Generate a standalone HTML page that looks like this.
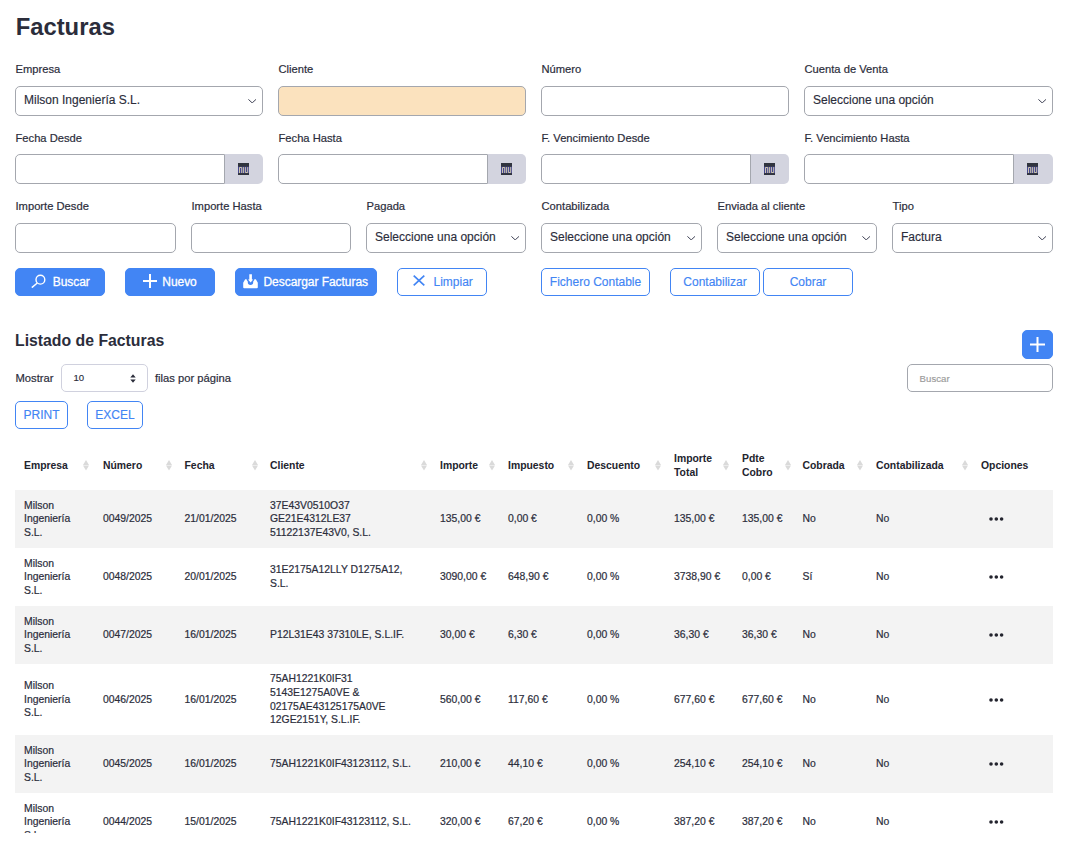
<!DOCTYPE html>
<html lang="es">
<head>
<meta charset="utf-8">
<title>Facturas</title>
<style>
*{box-sizing:border-box;}
html,body{margin:0;padding:0;background:#fff;}
body{width:1068px;height:851px;overflow:hidden;position:relative;font-family:"Liberation Sans",Arial,sans-serif;color:#2b2d3b;font-size:12px;}
#clip{position:absolute;left:0;top:0;width:1068px;height:833px;overflow:hidden;}
h1{position:absolute;left:15.7px;top:13px;margin:0;font-size:23.8px;line-height:28px;font-weight:bold;color:#2b2d3b;}
.lbl{-webkit-text-stroke:0.2px #2b2d3b;margin-left:0.5px;position:absolute;font-size:11.2px;line-height:14px;color:#2b2d3b;white-space:nowrap;}
.inp{-webkit-text-stroke:0.15px currentColor;position:absolute;height:30px;border:1px solid #a4a7ae;border-radius:5px;background:#fff;font-size:12px;line-height:27px;padding-left:8px;color:#2b2d3b;white-space:nowrap;}
.inp.orange{background:#fbe2be;}
.inp.grp{border-radius:5px 0 0 5px;}
.addon{position:absolute;width:38px;height:30px;background:#d3d4df;border-radius:0 5px 5px 0;}
.addon svg{position:absolute;left:13px;top:9px;}
.chev{position:absolute;right:5.8px;top:11.6px;width:8.4px;height:4.4px;}
.btn{position:absolute;height:28px;border-radius:5px;font-size:12px;line-height:26px;white-space:nowrap;}
.btn span{position:absolute;top:0;}
.btn svg{position:absolute;}
.btn.p{background:#4285f4;color:#fff;border:1px solid #4285f4;-webkit-text-stroke:0.3px #fff;letter-spacing:-0.05px;}
.btn.o{background:#fff;color:#4285f4;border:1px solid #4285f4;-webkit-text-stroke:0.15px #4285f4;}
h2{position:absolute;left:15px;top:331px;margin:0;font-size:15.8px;line-height:20px;font-weight:bold;color:#2b2d3b;}
table{position:absolute;left:15px;top:440px;width:1038px;border-collapse:collapse;font-size:10.4px;line-height:13.52px;color:#2b2d3b;table-layout:fixed;}
th{text-align:left;font-weight:bold;padding:2.2px 0 0 9px;height:50px;vertical-align:middle;position:relative;line-height:14px;color:#23242e;}
td{padding:0 0 0 9px;vertical-align:middle;-webkit-text-stroke:0.2px #2b2d3b;}
tbody tr{height:58px;}
tbody tr.r4{height:71px;}
tbody tr:nth-child(odd){background:#f3f3f3;}
.tl{display:block;position:relative;top:-0.6px;}
.sort{position:absolute;top:20.2px;width:6px;height:10.5px;}
.dots{display:block;margin-left:8px;margin-top:0;}
</style>
</head>
<body>
<div id="clip">
<h1>Facturas</h1>
<div class="lbl" style="left:15px;top:62px">Empresa</div>
<div class="lbl" style="left:278px;top:62px">Cliente</div>
<div class="lbl" style="left:541px;top:62px">Número</div>
<div class="lbl" style="left:804px;top:62px">Cuenta de Venta</div>
<div class="inp" style="left:15px;top:86px;width:248px">Milson Ingeniería S.L.<svg class="chev" viewBox="0 0 8.4 4.4"><path d="M0.4 0.4 L4.2 3.9 L8 0.4" fill="none" stroke="#35384c" stroke-width="0.95"/></svg></div>
<div class="inp orange" style="left:278px;top:86px;width:248px"></div>
<div class="inp" style="left:541px;top:86px;width:248px"></div>
<div class="inp" style="left:804px;top:86px;width:249px">Seleccione una opción<svg class="chev" viewBox="0 0 8.4 4.4"><path d="M0.4 0.4 L4.2 3.9 L8 0.4" fill="none" stroke="#35384c" stroke-width="0.95"/></svg></div>
<div class="lbl" style="left:15px;top:131px">Fecha Desde</div>
<div class="inp grp" style="left:15px;top:154px;width:210px"></div>
<div class="addon" style="left:225px;top:154px"><svg width="11" height="12" viewBox="0 0 11 12"><rect x="0" y="0" width="11" height="12" fill="#30343e"/><rect x="0" y="3.7" width="11" height="6.4" fill="#45468f"/><path d="M1.5 10V4.5H3.7V10M5.4 4.1V10M7.4 4.1V9.5H9.7V4.1" fill="none" stroke="#e4ddb0" stroke-width="0.85"/></svg></div>
<div class="lbl" style="left:278px;top:131px">Fecha Hasta</div>
<div class="inp grp" style="left:278px;top:154px;width:210px"></div>
<div class="addon" style="left:488px;top:154px"><svg width="11" height="12" viewBox="0 0 11 12"><rect x="0" y="0" width="11" height="12" fill="#30343e"/><rect x="0" y="3.7" width="11" height="6.4" fill="#45468f"/><path d="M1.5 10V4.5H3.7V10M5.4 4.1V10M7.4 4.1V9.5H9.7V4.1" fill="none" stroke="#e4ddb0" stroke-width="0.85"/></svg></div>
<div class="lbl" style="left:541px;top:131px">F. Vencimiento Desde</div>
<div class="inp grp" style="left:541px;top:154px;width:210px"></div>
<div class="addon" style="left:751px;top:154px"><svg width="11" height="12" viewBox="0 0 11 12"><rect x="0" y="0" width="11" height="12" fill="#30343e"/><rect x="0" y="3.7" width="11" height="6.4" fill="#45468f"/><path d="M1.5 10V4.5H3.7V10M5.4 4.1V10M7.4 4.1V9.5H9.7V4.1" fill="none" stroke="#e4ddb0" stroke-width="0.85"/></svg></div>
<div class="lbl" style="left:804px;top:131px">F. Vencimiento Hasta</div>
<div class="inp grp" style="left:804px;top:154px;width:210px"></div>
<div class="addon" style="left:1014px;top:154px;width:39px"><svg width="11" height="12" viewBox="0 0 11 12"><rect x="0" y="0" width="11" height="12" fill="#30343e"/><rect x="0" y="3.7" width="11" height="6.4" fill="#45468f"/><path d="M1.5 10V4.5H3.7V10M5.4 4.1V10M7.4 4.1V9.5H9.7V4.1" fill="none" stroke="#e4ddb0" stroke-width="0.85"/></svg></div>
<div class="lbl" style="left:15px;top:199px">Importe Desde</div>
<div class="inp" style="left:15px;top:223px;width:161px"></div>
<div class="lbl" style="left:191px;top:199px">Importe Hasta</div>
<div class="inp" style="left:191px;top:223px;width:160px"></div>
<div class="lbl" style="left:366px;top:199px">Pagada</div>
<div class="inp" style="left:366px;top:223px;width:160px">Seleccione una opción<svg class="chev" viewBox="0 0 8.4 4.4"><path d="M0.4 0.4 L4.2 3.9 L8 0.4" fill="none" stroke="#35384c" stroke-width="0.95"/></svg></div>
<div class="lbl" style="left:541px;top:199px">Contabilizada</div>
<div class="inp" style="left:541px;top:223px;width:161px">Seleccione una opción<svg class="chev" viewBox="0 0 8.4 4.4"><path d="M0.4 0.4 L4.2 3.9 L8 0.4" fill="none" stroke="#35384c" stroke-width="0.95"/></svg></div>
<div class="lbl" style="left:717px;top:199px">Enviada al cliente</div>
<div class="inp" style="left:717px;top:223px;width:160px">Seleccione una opción<svg class="chev" viewBox="0 0 8.4 4.4"><path d="M0.4 0.4 L4.2 3.9 L8 0.4" fill="none" stroke="#35384c" stroke-width="0.95"/></svg></div>
<div class="lbl" style="left:892px;top:199px">Tipo</div>
<div class="inp" style="left:892px;top:223px;width:161px">Factura<svg class="chev" viewBox="0 0 8.4 4.4"><path d="M0.4 0.4 L4.2 3.9 L8 0.4" fill="none" stroke="#35384c" stroke-width="0.95"/></svg></div>
<div class="btn p" style="left:15px;top:268px;width:90px"><svg style="left:15px;top:5px" width="15" height="14" viewBox="0 0 15 14"><circle cx="9.4" cy="5.7" r="4.4" fill="none" stroke="#fff" stroke-width="1.4"/><path d="M6.3 9 L0.8 13.6" stroke="#fff" stroke-width="1.5" fill="none"/></svg><span style="left:36.7px">Buscar</span></div>
<div class="btn p" style="left:125px;top:268px;width:90px"><svg style="left:17px;top:5.3px" width="14" height="14" viewBox="0 0 14 14"><path d="M7 0V14M0 7H14" stroke="#fff" stroke-width="2" fill="none"/></svg><span style="left:36.3px">Nuevo</span></div>
<div class="btn p" style="left:235px;top:268px;width:142px"><svg style="left:7.1px;top:4.7px" width="15" height="15" viewBox="0 0 15 15"><path d="M0.2 8.8L2.2 5.3H12.8L14.8 8.8V13.2Q14.8 14.2 13.8 14.2H1.2Q0.2 14.2 0.2 13.2Z" fill="#fff"/><path d="M3.7 5H11.3V6.1L10.2 7.6V8.3A2.7 2.7 0 0 1 4.8 8.3V7.6L3.7 6.1Z" fill="#4285f4"/><path d="M6.3 0.2H8.9V5.4H10.2L7.6 8.6L5 5.4H6.3Z" fill="#fff"/></svg><span style="left:27.5px">Descargar Facturas</span></div>
<div class="btn o" style="left:397px;top:268px;width:90px"><svg style="left:15px;top:6.4px" width="12" height="11" viewBox="0 0 12 11"><path d="M0.7 0.7L11.3 10.3M11.3 0.7L0.7 10.3" stroke="#4285f4" stroke-width="1.7" fill="none"/></svg><span style="left:35.5px">Limpiar</span></div>
<div class="btn o" style="left:541px;top:268px;width:109px;text-align:center">Fichero Contable</div>
<div class="btn o" style="left:670px;top:268px;width:90px;text-align:center">Contabilizar</div>
<div class="btn o" style="left:763px;top:268px;width:90px;text-align:center">Cobrar</div>
<h2>Listado de Facturas</h2>
<div class="btn p" style="left:1022px;top:330px;width:31px;height:29px"><svg style="left:7px;top:6px" width="15" height="15" viewBox="0 0 15 15"><path d="M7.5 0V15M0 7.5H15" stroke="#fff" stroke-width="2" fill="none"/></svg></div>
<div class="lbl" style="left:15px;top:371px">Mostrar</div>
<div class="inp" style="left:61px;top:364px;width:87px;height:28px;border-color:#d0d1de;font-size:9.6px;line-height:26px;padding-left:11.5px">10<svg style="position:absolute;left:68px;top:9px" width="6" height="9" viewBox="0 0 6 9"><path d="M0.3 3.6L3 0.3L5.7 3.6ZM0.3 5.4L3 8.7L5.7 5.4Z" fill="#2b2d3b"/></svg></div>
<div class="lbl" style="left:154.5px;top:371px">filas por página</div>
<div class="inp" style="left:907px;top:364px;width:146px;height:28px;font-size:9.6px;line-height:28px;padding-left:11.6px;color:#9a9a9a;letter-spacing:0.05px">Buscar</div>
<div class="btn o" style="left:15px;top:401px;width:53px;text-align:center">PRINT</div>
<div class="btn o" style="left:87px;top:401px;width:56px;text-align:center">EXCEL</div>
<table><colgroup>
<col style="width:79px">
<col style="width:81.5px">
<col style="width:85.5px">
<col style="width:170px">
<col style="width:68px">
<col style="width:79px">
<col style="width:87px">
<col style="width:68px">
<col style="width:60.5px">
<col style="width:73.5px">
<col style="width:105px">
<col style="width:81px">
</colgroup><thead><tr>
<th>Empresa<svg class="sort" style="left:68px" viewBox="0 0 6 10.5"><path d="M0 4.9L3 0L6 4.9ZM0 5.6L3 10.5L6 5.6Z" fill="#dadada"/></svg></th>
<th>Número<svg class="sort" style="left:72px" viewBox="0 0 6 10.5"><path d="M0 4.9L3 0L6 4.9ZM0 5.6L3 10.5L6 5.6Z" fill="#dadada"/></svg></th>
<th>Fecha<svg class="sort" style="left:76.0px" viewBox="0 0 6 10.5"><path d="M0 4.9L3 0L6 4.9ZM0 5.6L3 10.5L6 5.6Z" fill="#dadada"/></svg></th>
<th>Cliente<svg class="sort" style="left:160px" viewBox="0 0 6 10.5"><path d="M0 4.9L3 0L6 4.9ZM0 5.6L3 10.5L6 5.6Z" fill="#dadada"/></svg></th>
<th>Importe<svg class="sort" style="left:58px" viewBox="0 0 6 10.5"><path d="M0 4.9L3 0L6 4.9ZM0 5.6L3 10.5L6 5.6Z" fill="#dadada"/></svg></th>
<th>Impuesto<svg class="sort" style="left:69px" viewBox="0 0 6 10.5"><path d="M0 4.9L3 0L6 4.9ZM0 5.6L3 10.5L6 5.6Z" fill="#dadada"/></svg></th>
<th>Descuento<svg class="sort" style="left:77px" viewBox="0 0 6 10.5"><path d="M0 4.9L3 0L6 4.9ZM0 5.6L3 10.5L6 5.6Z" fill="#dadada"/></svg></th>
<th><span class="tl">Importe<br>Total</span><svg class="sort" style="left:58px" viewBox="0 0 6 10.5"><path d="M0 4.9L3 0L6 4.9ZM0 5.6L3 10.5L6 5.6Z" fill="#dadada"/></svg></th>
<th><span class="tl">Pdte<br>Cobro</span><svg class="sort" style="left:51.5px" viewBox="0 0 6 10.5"><path d="M0 4.9L3 0L6 4.9ZM0 5.6L3 10.5L6 5.6Z" fill="#dadada"/></svg></th>
<th>Cobrada<svg class="sort" style="left:63.5px" viewBox="0 0 6 10.5"><path d="M0 4.9L3 0L6 4.9ZM0 5.6L3 10.5L6 5.6Z" fill="#dadada"/></svg></th>
<th>Contabilizada<svg class="sort" style="left:95px" viewBox="0 0 6 10.5"><path d="M0 4.9L3 0L6 4.9ZM0 5.6L3 10.5L6 5.6Z" fill="#dadada"/></svg></th>
<th>Opciones</th>
</tr></thead><tbody>
<tr><td>Milson<br>Ingeniería<br>S.L.</td><td>0049/2025</td><td>21/01/2025</td><td>37E43V0510O37<br>GE21E4312LE37<br>51122137E43V0, S.L.</td><td>135,00 €</td><td>0,00 €</td><td>0,00 %</td><td>135,00 €</td><td>135,00 €</td><td>No</td><td>No</td><td><svg class="dots" width="15" height="4" viewBox="0 0 15 4"><circle cx="2" cy="2" r="1.8" fill="#23242e"/><circle cx="7.3" cy="2" r="1.8" fill="#23242e"/><circle cx="12.6" cy="2" r="1.8" fill="#23242e"/></svg></td></tr>
<tr><td>Milson<br>Ingeniería<br>S.L.</td><td>0048/2025</td><td>20/01/2025</td><td>31E2175A12LLY D1275A12,<br>S.L.</td><td>3090,00 €</td><td>648,90 €</td><td>0,00 %</td><td>3738,90 €</td><td>0,00 €</td><td>Sí</td><td>No</td><td><svg class="dots" width="15" height="4" viewBox="0 0 15 4"><circle cx="2" cy="2" r="1.8" fill="#23242e"/><circle cx="7.3" cy="2" r="1.8" fill="#23242e"/><circle cx="12.6" cy="2" r="1.8" fill="#23242e"/></svg></td></tr>
<tr><td>Milson<br>Ingeniería<br>S.L.</td><td>0047/2025</td><td>16/01/2025</td><td>P12L31E43 37310LE, S.L.IF.</td><td>30,00 €</td><td>6,30 €</td><td>0,00 %</td><td>36,30 €</td><td>36,30 €</td><td>No</td><td>No</td><td><svg class="dots" width="15" height="4" viewBox="0 0 15 4"><circle cx="2" cy="2" r="1.8" fill="#23242e"/><circle cx="7.3" cy="2" r="1.8" fill="#23242e"/><circle cx="12.6" cy="2" r="1.8" fill="#23242e"/></svg></td></tr>
<tr class="r4"><td>Milson<br>Ingeniería<br>S.L.</td><td>0046/2025</td><td>16/01/2025</td><td>75AH1221K0IF31<br>5143E1275A0VE &amp;<br>02175AE43125175A0VE<br>12GE2151Y, S.L.IF.</td><td>560,00 €</td><td>117,60 €</td><td>0,00 %</td><td>677,60 €</td><td>677,60 €</td><td>No</td><td>No</td><td><svg class="dots" width="15" height="4" viewBox="0 0 15 4"><circle cx="2" cy="2" r="1.8" fill="#23242e"/><circle cx="7.3" cy="2" r="1.8" fill="#23242e"/><circle cx="12.6" cy="2" r="1.8" fill="#23242e"/></svg></td></tr>
<tr><td>Milson<br>Ingeniería<br>S.L.</td><td>0045/2025</td><td>16/01/2025</td><td>75AH1221K0IF43123112, S.L.</td><td>210,00 €</td><td>44,10 €</td><td>0,00 %</td><td>254,10 €</td><td>254,10 €</td><td>No</td><td>No</td><td><svg class="dots" width="15" height="4" viewBox="0 0 15 4"><circle cx="2" cy="2" r="1.8" fill="#23242e"/><circle cx="7.3" cy="2" r="1.8" fill="#23242e"/><circle cx="12.6" cy="2" r="1.8" fill="#23242e"/></svg></td></tr>
<tr><td>Milson<br>Ingeniería<br>S.L.</td><td>0044/2025</td><td>15/01/2025</td><td>75AH1221K0IF43123112, S.L.</td><td>320,00 €</td><td>67,20 €</td><td>0,00 %</td><td>387,20 €</td><td>387,20 €</td><td>No</td><td>No</td><td><svg class="dots" width="15" height="4" viewBox="0 0 15 4"><circle cx="2" cy="2" r="1.8" fill="#23242e"/><circle cx="7.3" cy="2" r="1.8" fill="#23242e"/><circle cx="12.6" cy="2" r="1.8" fill="#23242e"/></svg></td></tr>
</tbody></table>
</div>
</body>
</html>
